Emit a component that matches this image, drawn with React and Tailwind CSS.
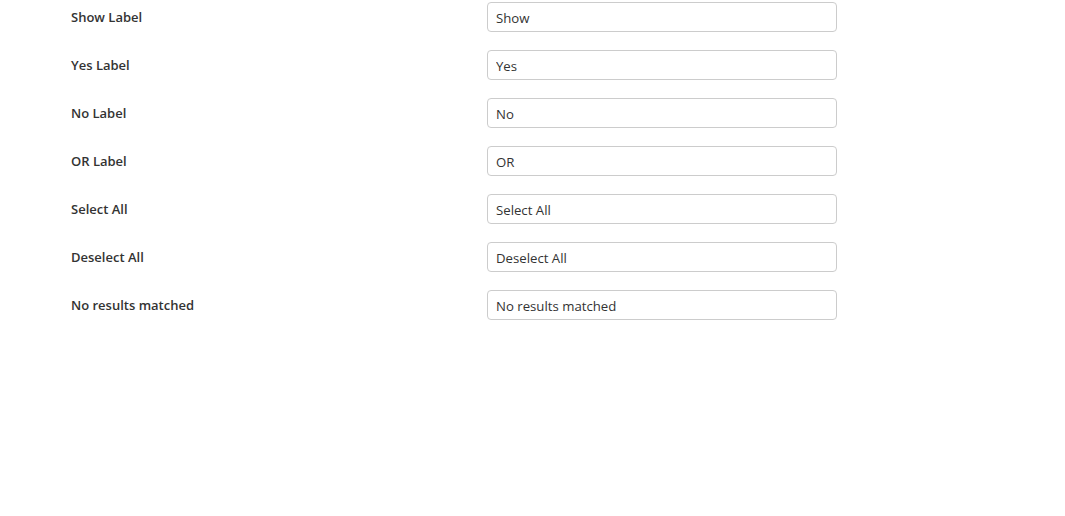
const fields = [
  { label: "Show Label", value: "Show" },
  { label: "Yes Label", value: "Yes" },
  { label: "No Label", value: "No" },
  { label: "OR Label", value: "OR" },
  { label: "Select All", value: "Select All" },
  { label: "Deselect All", value: "Deselect All" },
  { label: "No results matched", value: "No results matched" },
];

export default function App() {
  return (
    <div className="min-h-[516px] bg-white pl-[71px] pt-[2px] font-['Open_Sans',sans-serif] text-[#333]">
      {fields.map((f) => (
        <div key={f.label} className="mb-[18px] flex h-[30px] items-center">
          <label className="w-[416px] pt-[2px] text-[13px] font-semibold">{f.label}</label>
          <input
            type="text"
            defaultValue={f.value}
            className="h-[30px] w-[350px] rounded border border-[#ccc] px-2 pt-[2px] text-[13.2px] text-[#333] outline-none"
          />
        </div>
      ))}
    </div>
  );
}
